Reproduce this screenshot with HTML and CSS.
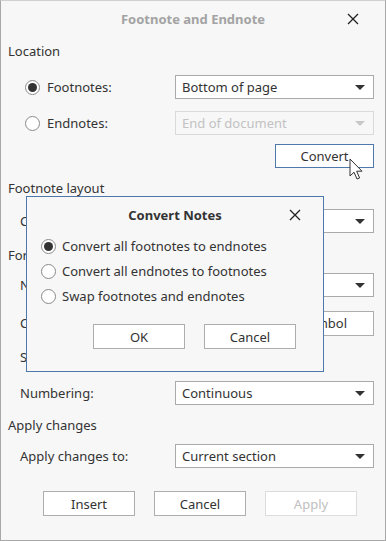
FILE: index.html
```html
<!DOCTYPE html>
<html>
<head>
<meta charset="utf-8">
<link rel="stylesheet" href="styles.css">
</head>
<body>
<div class="dialog">
  <div class="titlebar">
    <span class="title">Footnote and Endnote</span>
    <svg class="close" width="12" height="12" viewBox="0 0 12 12"><path d="M1 1L11 11M11 1L1 11" stroke="#222" stroke-width="1.3"/></svg>
  </div>

  <div class="heading h-location">Location</div>
  <div class="row r-foot">
    <label class="radio-label"><span class="radio checked"></span>Footnotes:</label>
    <div class="select"><span>Bottom of page</span><span class="arrow"></span></div>
  </div>
  <div class="row r-end">
    <label class="radio-label"><span class="radio"></span>Endnotes:</label>
    <div class="select disabled"><span>End of document</span><span class="arrow"></span></div>
  </div>
  <div class="row r-convert">
    <div class="btn btn-wide btn-focus">Convert</div>
  </div>

  <div class="heading h-layout">Footnote layout</div>
  <div class="row r-columns indent">
    <span class="label">Columns:</span>
    <div class="select"><span>Match section layout</span><span class="arrow"></span></div>
  </div>

  <div class="heading h-format">Format</div>
  <div class="row r-numfmt indent">
    <span class="label">Number format:</span>
    <div class="select"><span>1, 2, 3, ...</span><span class="arrow"></span></div>
  </div>
  <div class="row r-custom indent">
    <span class="label">Custom mark:</span>
    <div class="input-pair"><div class="input small"></div><div class="btn btn-wide">Symbol</div></div>
  </div>
  <div class="row r-start indent">
    <span class="label">Start at:</span>
    <div class="input spin">1</div>
  </div>
  <div class="row r-numbering indent">
    <span class="label">Numbering:</span>
    <div class="select"><span>Continuous</span><span class="arrow"></span></div>
  </div>

  <div class="heading h-apply">Apply changes</div>
  <div class="row r-applyto indent">
    <span class="label">Apply changes to:</span>
    <div class="select"><span>Current section</span><span class="arrow"></span></div>
  </div>

  <div class="footer">
    <div class="btn">Insert</div>
    <div class="btn">Cancel</div>
    <div class="btn disabled">Apply</div>
  </div>

  <svg class="cursor" width="15" height="23" viewBox="0 0 15 23"><path d="M1 1L1 18L5 14.2L8 21L10.6 20L7.7 13.2L13 13.2Z" fill="#fff" stroke="#333" stroke-width="1" stroke-linejoin="round"/></svg>

  <div class="modal">
    <div class="modal-title">
      <span class="mt-text">Convert Notes</span>
      <svg class="close modal-close" width="12" height="12" viewBox="0 0 12 12"><path d="M1 1L11 11M11 1L1 11" stroke="#222" stroke-width="1.3"/></svg>
    </div>
    <div class="options">
      <label class="radio-label"><span class="radio checked"></span>Convert all footnotes to endnotes</label>
      <label class="radio-label"><span class="radio"></span>Convert all endnotes to footnotes</label>
      <label class="radio-label"><span class="radio"></span>Swap footnotes and endnotes</label>
    </div>
    <div class="modal-buttons">
      <div class="btn">OK</div>
      <div class="btn">Cancel</div>
    </div>
  </div>
</div>
</body>
</html>
```

FILE: styles.css
```css
* { box-sizing: border-box; }
html, body { margin: 0; padding: 0; }
body {
  font-family: "Noto Sans", "Open Sans", sans-serif;
  font-size: 13px;
  color: #333;
  background: #fff;
}
.dialog {
  position: relative;
  width: 386px;
  height: 541px;
  border: 1px solid #a8a8a8;
  border-top-color: #d0d0d0;
  background: #f7f7f7;
  padding: 0 11px 0 7px;
  overflow: hidden;
}
.titlebar {
  height: 35px;
  display: flex;
  align-items: center;
  justify-content: center;
  position: relative;
}
.title {
  font-weight: bold;
  color: #a3a3a3;
  margin-left: 4px;
}
.close {
  position: absolute;
  display: block;
}
.titlebar .close { right: 15px; top: 12px; }

.heading {
  height: 22px;
  line-height: 22px;
}
.h-location { margin-top: 4px; }
.h-layout { margin-top: 9px; }
.h-format { margin-top: 11px; }
.h-apply { margin-top: 9px; }

.row {
  display: flex;
  align-items: center;
  justify-content: space-between;
  height: 24px;
}
.r-foot { margin-top: 13px; padding-left: 17px; }
.r-end { margin-top: 12px; padding-left: 17px; }
.r-convert { margin-top: 9px; justify-content: flex-end; }
.r-columns { margin-top: 10px; }
.r-numfmt { margin-top: 7px; }
.r-custom { margin-top: 14px; }
.r-start { margin-top: 10px; }
.r-numbering { margin-top: 12px; }
.r-applyto { margin-top: 8px; }
.indent { padding-left: 12px; }

.radio-label {
  display: flex;
  align-items: center;
}
.radio {
  width: 15px;
  height: 15px;
  border: 1px solid #8a8a8a;
  border-radius: 50%;
  background: #fff;
  margin-right: 7px;
  display: flex;
  align-items: center;
  justify-content: center;
}
.radio.checked::after {
  content: "";
  width: 9px;
  height: 9px;
  border-radius: 50%;
  background: #333;
}

.select {
  width: 199px;
  height: 24px;
  border: 1px solid #aaa;
  background: #fff;
  display: flex;
  align-items: center;
  justify-content: space-between;
  padding: 0 8px 0 6px;
}
.select.disabled {
  border-color: #dadada;
  background: #f7f7f7;
  color: #c2c2c2;
}
.arrow {
  width: 0;
  height: 0;
  border-left: 5px solid transparent;
  border-right: 5px solid transparent;
  border-top: 5px solid #333;
}
.select.disabled .arrow { border-top-color: #c8c8c8; }

.btn {
  width: 92px;
  height: 25px;
  border: 1px solid #adadad;
  background: #fff;
  display: flex;
  align-items: center;
  justify-content: center;
}
.btn-wide { width: 99px; }
.btn-focus { border-color: #4e78ac; height: 24px; }
.btn.disabled { border-color: #dcdcdc; color: #c0c0c0; }

.input-pair { display: flex; gap: 10px; }
.input {
  height: 24px;
  border: 1px solid #aaa;
  background: #fff;
}
.input.small { width: 90px; }
.input.spin { width: 120px; margin-right: 79px; padding: 2px 6px; }

.footer {
  display: flex;
  gap: 19px;
  padding-left: 35px;
  margin-top: 23px;
}

.cursor {
  position: absolute;
  left: 348px;
  top: 157px;
}

.modal {
  position: absolute;
  left: 25px;
  top: 195px;
  width: 298px;
  height: 176px;
  border: 1px solid #4e78ac;
  background: #f7f7f7;
}
.modal-title {
  position: relative;
  height: 35px;
  display: flex;
  align-items: center;
  justify-content: center;
  font-weight: bold;
}
.modal-close { right: 22px; top: 12px; }
.options {
  padding-left: 14px;
  margin-top: 4px;
  display: flex;
  flex-direction: column;
  gap: 5px;
}
.options .radio-label { height: 20px; }
.options .radio { margin-right: 6px; }
.modal-buttons {
  display: flex;
  gap: 19px;
  padding-left: 66px;
  margin-top: 18px;
}
```
